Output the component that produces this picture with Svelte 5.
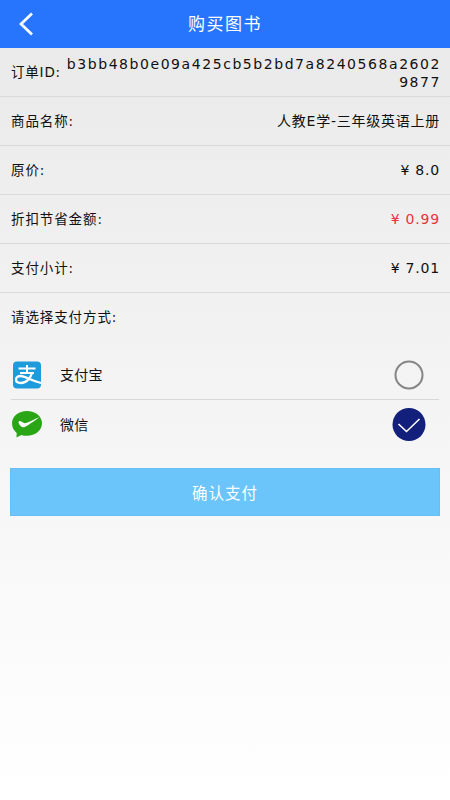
<!--
	Book purchase screen — order summary, payment method and confirm button.
-->
<script lang="ts">
	const rows = [
		{ label: '商品名称:', value: '人教E学-三年级英语上册', kind: 'name' },
		{ label: '原价:', value: '¥ 8.0', kind: 'price' },
		{ label: '折扣节省金额:', value: '¥ 0.99', kind: 'price discount' },
		{ label: '支付小计:', value: '¥ 7.01', kind: 'price' },
	];

	let method = $state('wechat');
</script>

<div class="page">
	<header>
		<button class="back" aria-label="返回">
			<svg width="16" height="26" viewBox="0 0 16 26">
				<path d="M14 2.5 3 13l11 10.5" />
			</svg>
		</button>
		<h1>购买图书</h1>
	</header>

	<div class="row order">
		<span class="label">订单ID:</span>
		<span class="order-id">b3bb48b0e09a425cb5b2bd7a8240568a2602<br />9877</span>
	</div>
	{#each rows as row}
		<div class="row">
			<span class="label">{row.label}</span>
			<span class={row.kind}>{row.value}</span>
		</div>
	{/each}
	<div class="row prompt"><span class="label">请选择支付方式:</span></div>

	<div class="methods">
		<button class="method" onclick={() => (method = 'alipay')}>
			<svg class="logo" width="32" height="32" viewBox="0 0 32 32">
				<rect x="3" y="2.5" width="28" height="27" rx="4" fill="#1e9bdc" />
				<g fill="none" stroke="#fff">
					<path d="M17 6v8M8.5 9.5h17M10 14h14" stroke-width="2" />
					<path
						d="M22 14c-1.5 5-5.5 10-11 10-3.3 0-5-1.5-5-3.5s2-3.5 4.6-3.5c4.4 0 10 4.5 20.4 7"
						stroke-width="2.3"
					/>
				</g>
			</svg>
			<span>支付宝</span>
			{@render radio(method === 'alipay')}
		</button>
		<button class="method" onclick={() => (method = 'wechat')}>
			<svg class="logo" width="32" height="32" viewBox="0 0 32 32">
				<path
					d="M17 3C8.700 3 2 8.400 2 15.300c0 4.300 2 7.600 4.700 9.600l-.2 4.600 4.800-2.600c1.800.6 3.700.9 5.700.9 8.300 0 15-5.500 15-12.500S25.300 3 17 3z"
					fill="#2aa515"
				/>
				<path
					d="M8.800 13.400c1.300-1.200 4.400 1.900 5.900 1.800C17.700 15.100 24 11 29.300 9.200c-5 3.600-11.700 8.700-15.500 10.100-2.200.5-6.400-4.500-5-5.900z"
					fill="#fff"
				/>
			</svg>
			<span>微信</span>
			{@render radio(method === 'wechat')}
		</button>
	</div>

	<button class="confirm">确认支付</button>
</div>

{#snippet radio(checked: boolean)}
	<svg class="radio" width="34" height="34" viewBox="0 0 34 34">
		{#if checked}
			<circle cx="17" cy="16.5" r="16.5" fill="#12207c" />
			<path d="m6.500 16 8 7.500L27.500 11" fill="none" stroke="#fff" stroke-width="1.6" />
		{:else}
			<circle cx="17" cy="17" r="13.5" fill="none" stroke="#858585" stroke-width="2" />
		{/if}
	</svg>
{/snippet}

<style>
	:global(body) {
		margin: 0;
	}

	.page {
		height: 800px;
		box-sizing: border-box;
		overflow: hidden;
		background: linear-gradient(#eaeaea 48px, #f4f4f4 400px, #fff);
		font-family: 'DejaVu Sans', 'Noto Sans CJK SC', sans-serif;
		font-size: 14px;
		color: #111;
	}

	button {
		border: 0;
		padding: 0;
		background: none;
		font: inherit;
		color: inherit;
		cursor: pointer;
	}

	header {
		display: grid;
		grid-template-columns: 52px 1fr 52px;
		align-items: center;
		height: 48px;
		background: #2775fd;
		color: #fff;
	}

	.back {
		display: flex;
		padding-left: 18px;
	}

	.back path {
		fill: none;
		stroke: #fff;
		stroke-width: 2.7;
	}

	h1 {
		margin: 0;
		font-size: 17px;
		line-height: 24px;
		font-weight: 400;
		letter-spacing: 1.5px;
		text-align: center;
	}

	.row {
		display: flex;
		align-items: center;
		justify-content: space-between;
		box-sizing: border-box;
		height: 49px;
		padding: 0 10px 0 11px;
		border-bottom: 1px solid #dadada;
		line-height: 19px;
		white-space: nowrap;
	}

	.prompt {
		height: 58px;
		padding-bottom: 9px;
		border: 0;
	}

	.label {
		font-size: 13.5px;
		letter-spacing: 0.9px;
	}

	.order .label {
		letter-spacing: 0.8px;
	}

	.order-id {
		font-size: 14px;
		line-height: 18px;
		letter-spacing: 1.56px;
		margin-right: -1px;
		padding-top: 1px;
		text-align: right;
	}

	.name {
		letter-spacing: 0.75px;
	}

	.price {
		letter-spacing: 0.8px;
	}

	.discount {
		color: #e9343c;
	}

	.methods {
		padding: 0 11px;
	}

	.method {
		display: flex;
		align-items: center;
		box-sizing: border-box;
		width: 100%;
		height: 49px;
		padding-right: 13px;
		letter-spacing: 0.3px;
	}

	.method span {
		padding-bottom: 2px;
	}

	.method:first-child {
		border-bottom: 1px solid #d8d8d8;
	}

	.logo {
		margin: 0 18px 0 -1px;
	}

	.method:last-child .logo {
		margin-bottom: 2px;
	}

	.radio {
		margin-left: auto;
	}

	.confirm {
		display: block;
		width: 430px;
		height: 48px;
		margin: 19px auto 0;
		background: #6bc5fa;
		border: 1px solid #60c0f7;
		color: #fff;
		font-size: 15.5px;
		letter-spacing: 1px;
	}
</style>
